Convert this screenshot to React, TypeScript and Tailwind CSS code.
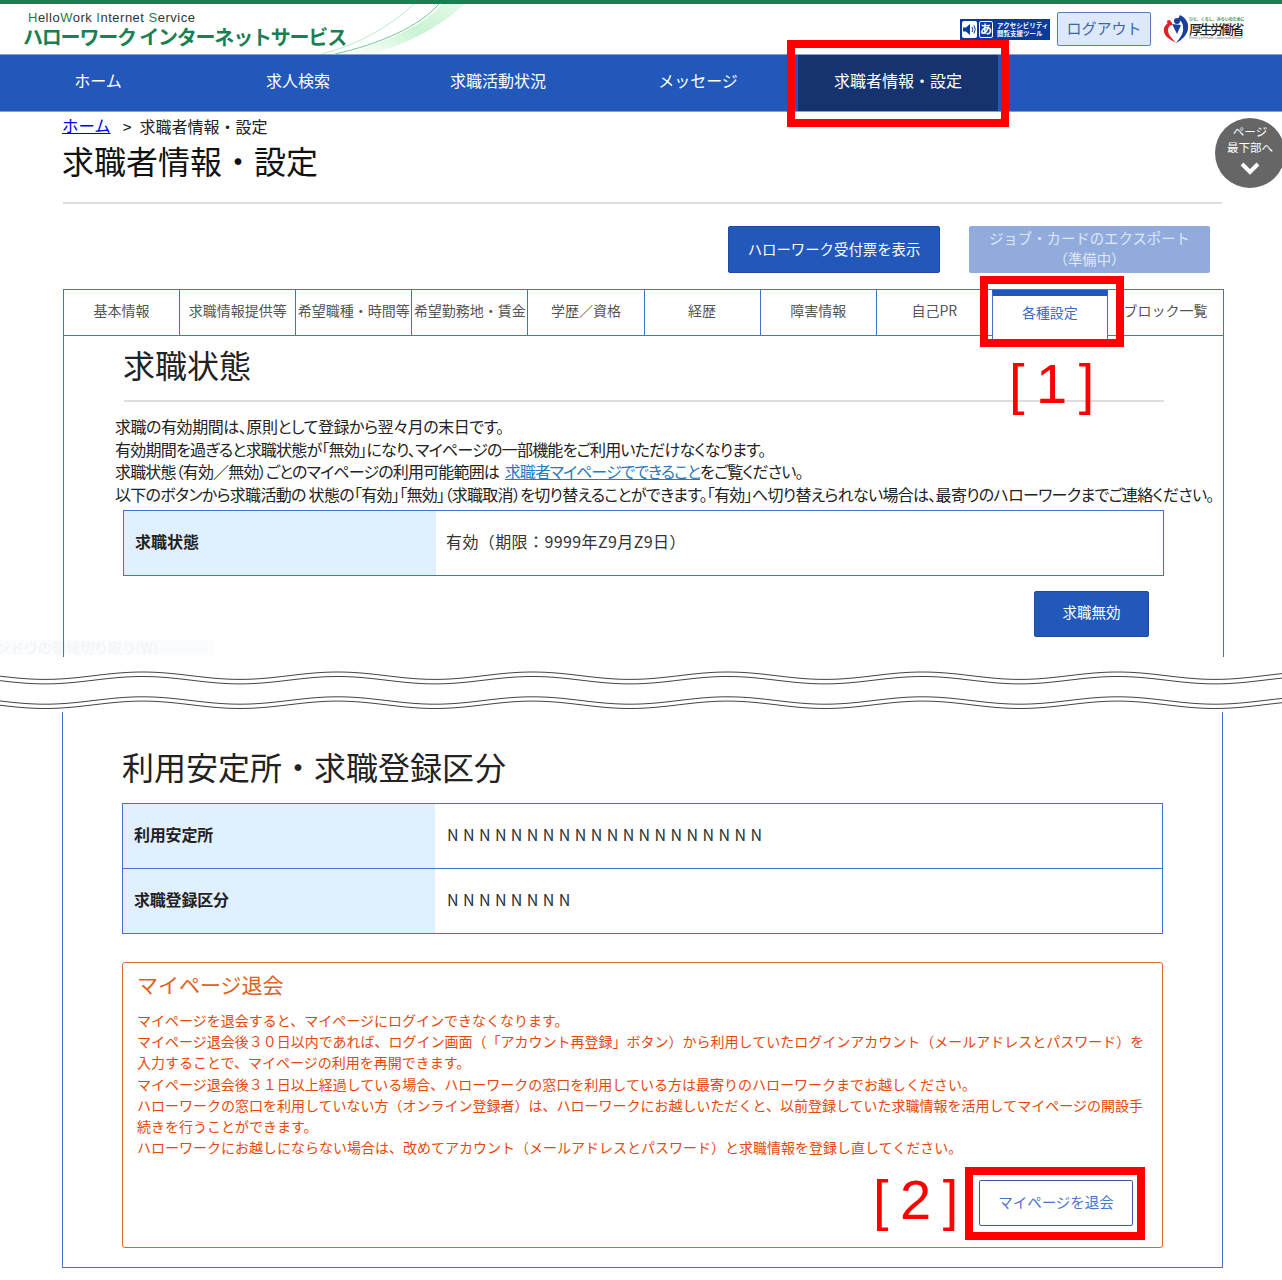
import React from 'react';

const navItems = ['ホーム', '求人検索', '求職活動状況', 'メッセージ', '求職者情報・設定'];
const tabs = ['基本情報', '求職情報提供等', '希望職種・時間等', '希望勤務地・賃金', '学歴／資格', '経歴', '障害情報', '自己PR', '各種設定', 'ブロック一覧'];

const wavePath = (base: number) => {
  const pts: string[] = [];
  for (let x = 0; x <= 1284; x += 6) {
    const y = base + 3.7 * Math.cos(((x - 45) / 195) * Math.PI * 2);
    pts.push(`${x} ${y.toFixed(2)}`);
  }
  return `M${pts.join(' L')}`;
};

const WaveBreak = () => (
  <div className="h-[55px] w-full bg-white">
    <svg width="1282" height="55" viewBox="0 0 1282 55" fill="none" stroke="#444" strokeWidth="1">
      <path d={wavePath(18.7)} />
      <path d={wavePath(23.2)} />
      <path d={wavePath(43.5)} />
      <path d={wavePath(47.8)} />
    </svg>
  </div>
);

const InfoRow = ({ label, value, last }: { label: string; value: string; last?: boolean }) => (
  <div className={`flex ${last ? 'h-[64px]' : 'h-[65px] border-b border-[#4472cf]'}`}>
    <div className="flex w-[312px] items-center bg-[#e1f0ff] pb-[4px] pl-[11px] text-[16px] font-bold tracking-[-0.2px] text-[#222]">{label}</div>
    <div className="flex flex-1 items-center bg-white pb-[4px] pl-[12px] text-[16px] tracking-[4.4px] text-[#333]">{value}</div>
  </div>
);

const MhlwLogo = () => (
  <div className="ml-[12px] flex h-[34px] w-[82px] items-center">
    <svg width="27" height="28" viewBox="0 0 27 28" className="shrink-0">
      <path d="M9 7 C3 8 0 12 1 17 C2 22 8 25 13 28 C9 23 5 20 5 15 C5 12 7 10 9 10 Z" fill="#e3202a" />
      <circle cx="6" cy="7" r="2" fill="#e3202a" />
      <path d="M17 0 C23 3 26 8 25 14 C24 20 19 25 13 28 C17 23 21 18 20 12 C20 8 18 6 15 4 Z" fill="#1b3f9c" />
      <circle cx="14" cy="6" r="3" fill="#1b3f9c" />
      <path d="M9 9 L18 10 L14 19 Z" fill="#1b3f9c" />
    </svg>
    <div className="-ml-[1px] flex w-[55px] flex-col items-start overflow-hidden pb-[2px] leading-none">
      <span className="text-[4px] leading-[5px] font-bold whitespace-nowrap text-[#2c8a3c]">ひと、くらし、みらいのために</span>
      <span className="text-[13px] leading-[14px] font-medium tracking-[-2.4px] whitespace-nowrap text-[#222]">厚生労働省</span>
      <span className="text-[3px] leading-[4px] whitespace-nowrap text-[#777]">Ministry of Health, Labour and Welfare</span>
    </div>
  </div>
);

const AccessBadge = () => (
  <div className="flex h-[21px] w-[90px] items-center gap-[2px] bg-[#0b3a9c] px-[2px]">
    <div className="flex h-[17px] w-[19px] items-center justify-center rounded-[2px] bg-white">
      <svg width="15" height="13" viewBox="0 0 15 13">
        <path d="M1 4.5 H4 L8 1 V12 L4 8.5 H1 Z" fill="#0b3a9c" />
        <path d="M10 4 Q11.5 6.5 10 9 M12 2.5 Q14.5 6.5 12 10.5" stroke="#0b3a9c" strokeWidth="1" fill="none" />
      </svg>
    </div>
    <div className="flex h-[17px] w-[17px] items-center justify-center rounded-[2px] border border-white pb-[1px] text-[12px] leading-none font-bold text-white">
      あ
    </div>
    <div className="ml-[2px] flex flex-col text-[6.5px] leading-[8px] font-bold whitespace-nowrap text-white">
      <span>アクセシビリティ</span>
      <span>閲覧支援ツール</span>
    </div>
  </div>
);

const Header = () => (
  <header className="relative flex h-[50px] items-start justify-between overflow-hidden bg-white">
    <svg className="absolute top-0 left-[300px]" width="170" height="50" viewBox="0 0 170 50">
      <defs>
        <linearGradient id="leaf" x1="0" y1="1" x2="1" y2="0">
          <stop offset="0" stopColor="#ffffff" />
          <stop offset="0.55" stopColor="#c9f3d2" />
          <stop offset="1" stopColor="#e6faea" />
        </linearGradient>
      </defs>
      <path d="M42 50 C90 38 125 20 142 0 L165 0 C140 22 110 40 70 50 Z" fill="url(#leaf)" />
      <path d="M22 50 C60 40 90 22 114 0" stroke="#bfe8c9" strokeWidth="1" fill="none" />
      <path d="M35 50 C80 40 120 22 139 0" stroke="#6fca8f" strokeWidth="1" fill="none" />
    </svg>
    <div className="relative pt-[7px] pl-[23px]">
      <div className="pl-[5px] font-['Liberation_Sans',sans-serif] text-[13px] leading-[14px] tracking-[0.5px] whitespace-nowrap text-[#333]">
        <span className="text-[#1a7f52]">H</span>ello<span className="text-[#1a7f52]">W</span>ork <span className="text-[#1a7f52]">I</span>nternet <span className="text-[#1a7f52]">S</span>ervice
      </div>
      <div className="text-[20px] leading-[24px] font-bold tracking-[-1.2px] whitespace-nowrap text-[#1a7f52]">ハローワーク インターネットサービス</div>
    </div>
    <div className="relative flex items-center pt-[8px] pr-[37px]">
      <AccessBadge />
      <button type="button" className="ml-[7px] h-[34px] w-[94px] rounded-[2px] border border-[#5b7db5] bg-[#dde9fa] pb-[2px] text-[15px] text-[#3f63a8]">
        ログアウト
      </button>
      <MhlwLogo />
    </div>
  </header>
);

const Nav = () => (
  <nav className="flex h-[58px] border-y border-y-[#7f9fd8] bg-[#2358bb]">
    {navItems.map((item, i) => (
      <div
        key={item}
        className={`flex w-[200px] items-center justify-center pb-[6px] text-[16px] text-white ${i === 0 ? '-ml-[2px]' : ''} ${i === 4 ? 'bg-[#16336f]' : ''}`}
      >
        {item}
      </div>
    ))}
  </nav>
);

const Tabs = () => (
  <div className="flex h-[47px] w-[1161px] border-x border-t border-[#4472cf]">
    {tabs.map((tab, i) => {
      if (tab === '各種設定') {
        return (
          <div key={tab} className="relative z-10 flex h-[49px] w-[116px] items-center justify-center border-x border-t-[6px] border-x-[#4472cf] border-t-[#2358bb] bg-white pb-[10px] text-[14px] whitespace-nowrap text-[#3a6cc4]">
            {tab}
          </div>
        );
      }
      return (
        <div
          key={tab}
          className={`flex h-[46px] flex-1 items-center justify-center border-b border-[#4472cf] pb-[4px] text-[14px] whitespace-nowrap text-[#555] ${i < 7 ? 'border-r' : ''}`}
        >
          {tab}
        </div>
      );
    })}
  </div>
);

const NoticeBox = () => (
  <div className="mt-[28px] ml-[59px] h-[286px] w-[1041px] rounded-[3px] border border-[#db6a2c] px-[14px] pt-[6px]">
    <h3 className="text-[21px] leading-[30px] text-[#e2601c]">マイページ退会</h3>
    <div className="mt-[11px] text-[14px] leading-[21.2px] whitespace-nowrap text-[#e8470a]">
      <p>マイページを退会すると、マイページにログインできなくなります。</p>
      <p>マイページ退会後３０日以内であれば、ログイン画面（「アカウント再登録」ボタン）から利用していたログインアカウント（メールアドレスとパスワード）を</p>
      <p>入力することで、マイページの利用を再開できます。</p>
      <p>マイページ退会後３１日以上経過している場合、ハローワークの窓口を利用している方は最寄りのハローワークまでお越しください。</p>
      <p>ハローワークの窓口を利用していない方（オンライン登録者）は、ハローワークにお越しいただくと、以前登録していた求職情報を活用してマイページの開設手</p>
      <p>続きを行うことができます。</p>
      <p>ハローワークにお越しにならない場合は、改めてアカウント（メールアドレスとパスワード）と求職情報を登録し直してください。</p>
    </div>
    <div className="mt-[22px] flex justify-end pr-[15px]">
      <button type="button" className="h-[46px] w-[154px] rounded-[2px] border border-[#3c5f9e] bg-white pb-[4px] text-[14.5px] text-[#4a76c8]">
        マイページを退会
      </button>
    </div>
  </div>
);

const App = () => (
  <div className="relative h-[1280px] w-[1282px] overflow-hidden bg-white font-['Noto_Sans_CJK_JP',sans-serif] [text-spacing-trim:space-all]">
    {/* faint leftover of the screen capture tool */}
    <div className="absolute top-[640px] left-0 h-[15px] w-[213px] overflow-hidden bg-[#fbfcfe] text-[14px] leading-[15px] whitespace-nowrap text-[#f2f4f8]">
      <span className="-ml-[32px] inline-block">ウィンドウの領域切り取り(W)</span>
    </div>

    <div className="h-[4px] bg-[#1a7f52]" />
    <Header />
    <Nav />

    <div className="relative pl-[62px]">
      <div className="flex h-[30px] items-center pb-[3px] text-[16px] text-[#222]">
        <a href="#home" className="text-[16.4px] text-[#0000ee] underline">ホーム</a>
        <span className="ml-[12px]">&gt;</span>
        <span className="ml-[8px]">求職者情報・設定</span>
      </div>
      <h1 className="text-[32px] leading-[36px] text-[#111]">求職者情報・設定</h1>
      <div className="mt-[24px] ml-[1px] h-[2px] w-[1159px] bg-[#ddd]" />

      <div className="mt-[22px] flex h-[47px]">
        <button type="button" className="ml-[666px] h-[47px] w-[212px] rounded-[2px] border border-[#1d4a9e] bg-[#2358bb] pb-[2px] text-[14.4px] text-white">
          ハローワーク受付票を表示
        </button>
        <button type="button" className="ml-[29px] h-[47px] w-[241px] rounded-[2px] bg-[#91abdd] pb-[4px] text-[14.4px] leading-[21px] text-[#dfe7f6]">
          ジョブ・カードのエクスポート
          <br />
          （準備中）
        </button>
      </div>

      <div className="mt-[16px] ml-[1px]">
        <Tabs />
        <div className="h-[321px] w-[1161px] border-x border-[#4472cf]">
          <h2 className="ml-[59px] pt-[10px] text-[32px] leading-[36px] text-[#222]">求職状態</h2>
          <div className="mt-[18px] ml-[60px] h-[2px] w-[1040px] bg-[#ddd]" />
          <div className="mt-[13px] ml-[51px] text-[16px] leading-[22.7px] whitespace-nowrap text-[#222] [font-feature-settings:'palt']">
            <p className="tracking-[-0.45px]">求職の有効期間は、原則として登録から翌々月の末日です。</p>
            <p className="tracking-[-0.77px]">有効期間を過ぎると求職状態が「無効」になり、マイページの一部機能をご利用いただけなくなります。</p>
            <p className="tracking-[-0.84px]">
              求職状態（有効／無効）ごとのマイページの利用可能範囲は <a href="#can" className="ml-[3px] tracking-[-1px] text-[#2b7ab8] underline">求職者マイページでできること</a>をご覧ください。
            </p>
            <p className="tracking-[-0.7px]">以下のボタンから求職活動の 状態の「有効」「無効」（求職取消）を切り替えることができます。「有効」へ切り替えられない場合は、最寄りのハローワークまでご連絡ください。</p>
          </div>
          <div className="mt-[4px] ml-[59px] w-[1041px] border border-[#4472cf]">
            <div className="flex h-[64px]">
              <div className="flex w-[312px] items-center bg-[#e1f0ff] pb-[4px] pl-[11px] text-[16px] font-bold text-[#222]">求職状態</div>
              <div className="flex flex-1 items-center pb-[4px] pl-[10px] text-[16px] tracking-[0.4px] text-[#333]">有効（期限：9999年Z9月Z9日）</div>
            </div>
          </div>
          <div className="mt-[15px] flex justify-end pr-[74px]">
            <button type="button" className="h-[46px] w-[115px] rounded-[2px] border border-[#1d4a9e] bg-[#2358bb] pb-[4px] text-[14.5px] text-white">
              求職無効
            </button>
          </div>
        </div>
      </div>
    </div>

    <WaveBreak />

    <div className="ml-[62px] h-[556px] w-[1161px] border-x border-b border-[#4472cf]">
      <h2 className="ml-[59px] pt-[34px] text-[32px] leading-[40px] text-[#222]">利用安定所・求職登録区分</h2>
      <div className="mt-[17px] ml-[59px] w-[1041px] border border-[#4472cf]">
        <InfoRow label="利用安定所" value="NNNNNNNNNNNNNNNNNNNN" />
        <InfoRow label="求職登録区分" value="NNNNNNNN" last />
      </div>
      <NoticeBox />
    </div>

    {/* page bottom button */}
    <div className="absolute top-[118px] left-[1215px] flex h-[70px] w-[70px] flex-col items-center rounded-full bg-[#666] pt-[5px] text-[11.5px] leading-[16px] text-white">
      <span>ページ</span>
      <span className="whitespace-nowrap">最下部へ</span>
      <svg width="22" height="14" viewBox="0 0 22 14" className="mt-[6px]">
        <path d="M3 3 L11 11 L19 3" stroke="#fff" strokeWidth="4" fill="none" />
      </svg>
    </div>

    {/* red callouts */}
    <div className="absolute top-[40px] left-[787px] h-[87px] w-[222px] border-[8px] border-[#ff0000]" />
    <div className="absolute top-[276px] left-[980px] z-20 h-[71px] w-[144px] border-[8px] border-[#ff0000]" />
    <div className="absolute top-[1167px] left-[965px] h-[73px] w-[180px] border-[8px] border-[#ff0000]" />
    <div className="absolute top-[352px] left-[1009px] font-['Liberation_Sans',sans-serif] text-[56px] leading-[64px] tracking-[-2px] whitespace-nowrap text-[#ff0000]">[ 1 ]</div>
    <div className="absolute top-[1168px] left-[873px] font-['Liberation_Sans',sans-serif] text-[56px] leading-[64px] tracking-[-2px] whitespace-nowrap text-[#ff0000]">[ 2 ]</div>
  </div>
);

export default App;
